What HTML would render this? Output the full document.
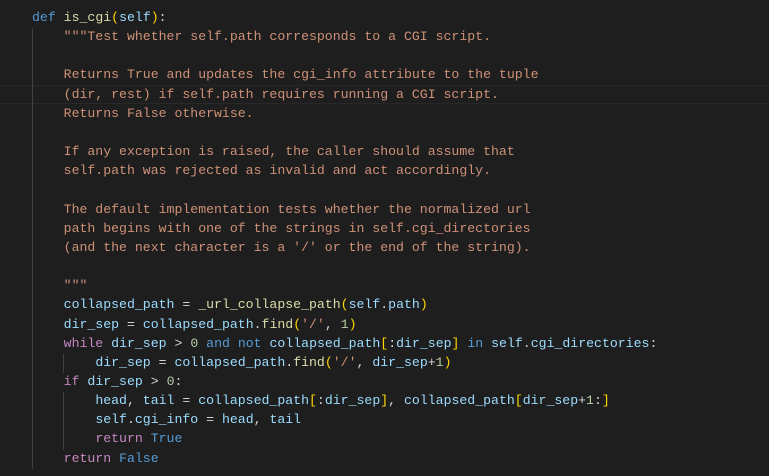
<!DOCTYPE html>
<html><head><meta charset="utf-8"><style>
html,body{margin:0;padding:0;background:#1e1e1e;width:769px;height:476px;overflow:hidden}
#c{position:absolute;left:32px;top:8px;font-family:"Liberation Mono",monospace;font-size:13.2px;line-height:19.17px;color:#d4d4d4;white-space:pre}
.l{height:19.17px}
.k{color:#569cd6}.c{color:#c586c0}.v{color:#9cdcfe}.f{color:#dcdcaa}.s{color:#ce9178}.n{color:#b5cea8}.y{color:#ffd700}
.g{position:absolute;width:1px;background:#404040}
.hl{position:absolute;left:0;width:769px;top:85px;height:19px;border-top:1px solid #282828;border-bottom:1px solid #282828;box-sizing:border-box}
</style></head><body>
<div class="hl"></div>
<div class="g" style="left:32px;top:28px;height:441px"></div>
<div class="g" style="left:63px;top:354px;height:19px"></div>
<div class="g" style="left:63px;top:392px;height:58px"></div>
<div id="c"><div class="l"><span class="k">def</span> <span class="f">is_cgi</span><span class="y">(</span><span class="v">self</span><span class="y">)</span>:</div><div class="l"><span class="s">    """Test whether self.path corresponds to a CGI script.</span></div><div class="l"> </div><div class="l"><span class="s">    Returns True and updates the cgi_info attribute to the tuple</span></div><div class="l"><span class="s">    (dir, rest) if self.path requires running a CGI script.</span></div><div class="l"><span class="s">    Returns False otherwise.</span></div><div class="l"> </div><div class="l"><span class="s">    If any exception is raised, the caller should assume that</span></div><div class="l"><span class="s">    self.path was rejected as invalid and act accordingly.</span></div><div class="l"> </div><div class="l"><span class="s">    The default implementation tests whether the normalized url</span></div><div class="l"><span class="s">    path begins with one of the strings in self.cgi_directories</span></div><div class="l"><span class="s">    (and the next character is a '/' or the end of the string).</span></div><div class="l"> </div><div class="l"><span class="s">    """</span></div><div class="l">    <span class="v">collapsed_path</span> = <span class="f">_url_collapse_path</span><span class="y">(</span><span class="v">self</span>.<span class="v">path</span><span class="y">)</span></div><div class="l">    <span class="v">dir_sep</span> = <span class="v">collapsed_path</span>.<span class="f">find</span><span class="y">(</span><span class="s">'/'</span>, <span class="n">1</span><span class="y">)</span></div><div class="l">    <span class="c">while</span> <span class="v">dir_sep</span> &gt; <span class="n">0</span> <span class="k">and</span> <span class="k">not</span> <span class="v">collapsed_path</span><span class="y">[</span>:<span class="v">dir_sep</span><span class="y">]</span> <span class="k">in</span> <span class="v">self</span>.<span class="v">cgi_directories</span>:</div><div class="l">        <span class="v">dir_sep</span> = <span class="v">collapsed_path</span>.<span class="f">find</span><span class="y">(</span><span class="s">'/'</span>, <span class="v">dir_sep</span>+<span class="n">1</span><span class="y">)</span></div><div class="l">    <span class="c">if</span> <span class="v">dir_sep</span> &gt; <span class="n">0</span>:</div><div class="l">        <span class="v">head</span>, <span class="v">tail</span> = <span class="v">collapsed_path</span><span class="y">[</span>:<span class="v">dir_sep</span><span class="y">]</span>, <span class="v">collapsed_path</span><span class="y">[</span><span class="v">dir_sep</span>+<span class="n">1</span>:<span class="y">]</span></div><div class="l">        <span class="v">self</span>.<span class="v">cgi_info</span> = <span class="v">head</span>, <span class="v">tail</span></div><div class="l">        <span class="c">return</span> <span class="k">True</span></div><div class="l">    <span class="c">return</span> <span class="k">False</span></div></div>
</body></html>
